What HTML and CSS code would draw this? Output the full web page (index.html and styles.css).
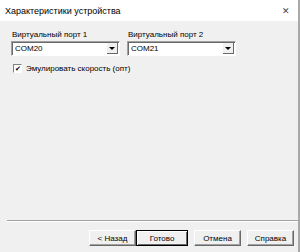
FILE: index.html
```html
<!DOCTYPE html>
<html lang="ru">
<head>
  <meta charset="UTF-8" />
  <title>Характеристики устройства</title>
  <link rel="stylesheet" href="styles.css">
</head>
<body>
  <div class="window">
    <div class="titlebar">
      <span class="title">Характеристики устройства</span>
      <span class="close">✕</span>
    </div>

    <div class="content">
      <div class="ports">
        <div class="field">
          <label>Виртуальный порт 1</label>
          <div class="combo">
            <span class="combo-value">COM20</span>
            <span class="combo-btn"><span class="arrow"></span></span>
          </div>
        </div>
        <div class="field">
          <label>Виртуальный порт 2</label>
          <div class="combo">
            <span class="combo-value">COM21</span>
            <span class="combo-btn"><span class="arrow"></span></span>
          </div>
        </div>
      </div>

      <div class="check-row">
        <span class="checkbox">✔</span>
        <span>Эмулировать скорость (опт)</span>
      </div>
    </div>

    <div class="footer">
      <div class="separator"></div>
      <div class="buttons">
        <button class="btn">&lt; Назад</button>
        <button class="btn default">Готово</button>
        <button class="btn gap">Отмена</button>
        <button class="btn gap">Справка</button>
      </div>
    </div>
  </div>
</body>
</html>
```

FILE: styles.css
```css
body {
  margin: 0;
  padding: 0;
  font-family: 'Liberation Sans', Arial, sans-serif;
  font-size: 8px;
  color: #000;
  background: #f0f0f0;
}

.window {
  width: 298px;
  height: 252px;
  border-right: 2px solid #a8a8a8;
  display: flex;
  flex-direction: column;
  background: #f0f0f0;
}

.titlebar {
  height: 21px;
  background: white;
  display: flex;
  align-items: center;
  justify-content: space-between;
  padding: 0 8px 0 5px;
}

.title {
  font-size: 9px;
}

.close {
  font-size: 9px;
  color: #444;
}

.content {
  flex: 1;
  padding: 9px 12px 0 11px;
}

.ports {
  display: flex;
  gap: 7px;
}

.field label {
  display: block;
  padding-left: 1px;
  margin-bottom: 2px;
}

.combo {
  width: 107px;
  height: 13px;
  border: 1px solid;
  border-color: #a0a0a0 #ffffff #ffffff #a0a0a0;
  box-shadow: inset 1px 1px 0 #696969;
  background: white;
  display: flex;
  align-items: center;
}

.combo-value {
  flex: 1;
  padding-left: 3px;
}

.combo-btn {
  width: 11px;
  height: 11px;
  margin-right: 1px;
  background: #f0f0f0;
  border-right: 1px solid #696969;
  border-bottom: 1px solid #696969;
  box-sizing: border-box;
  display: flex;
  align-items: center;
  justify-content: center;
}

.arrow {
  border-left: 3px solid transparent;
  border-right: 3px solid transparent;
  border-top: 3px solid #000;
}

.check-row {
  display: flex;
  align-items: center;
  gap: 4px;
  margin-top: 8px;
  padding-left: 2px;
}

.checkbox {
  width: 7px;
  height: 7px;
  border: 1px solid;
  border-color: #808080 #ffffff #ffffff #808080;
  background: white;
  font-size: 7px;
  line-height: 7px;
  text-align: center;
  color: #000;
}

.footer {
  padding: 0 0 6px 7px;
}

.separator {
  height: 1px;
  background: #a0a0a0;
  border-bottom: 1px solid white;
}

.buttons {
  display: flex;
  justify-content: flex-end;
  margin-top: 8px;
  padding-right: 4px;
}

.btn {
  width: 47px;
  height: 16px;
  padding: 0;
  font-family: inherit;
  font-size: 8px;
  color: #000;
  background: #f0f0f0;
  border: 1px solid;
  border-color: #ffffff #696969 #696969 #ffffff;
  box-shadow: inset -1px -1px 0 #a0a0a0;
}

.btn.default {
  width: 52px;
  border-color: #000;
  box-shadow: inset 1px 1px 0 #fff, inset -1px -1px 0 #696969;
}

.btn.gap {
  margin-left: 6px;
}
```
